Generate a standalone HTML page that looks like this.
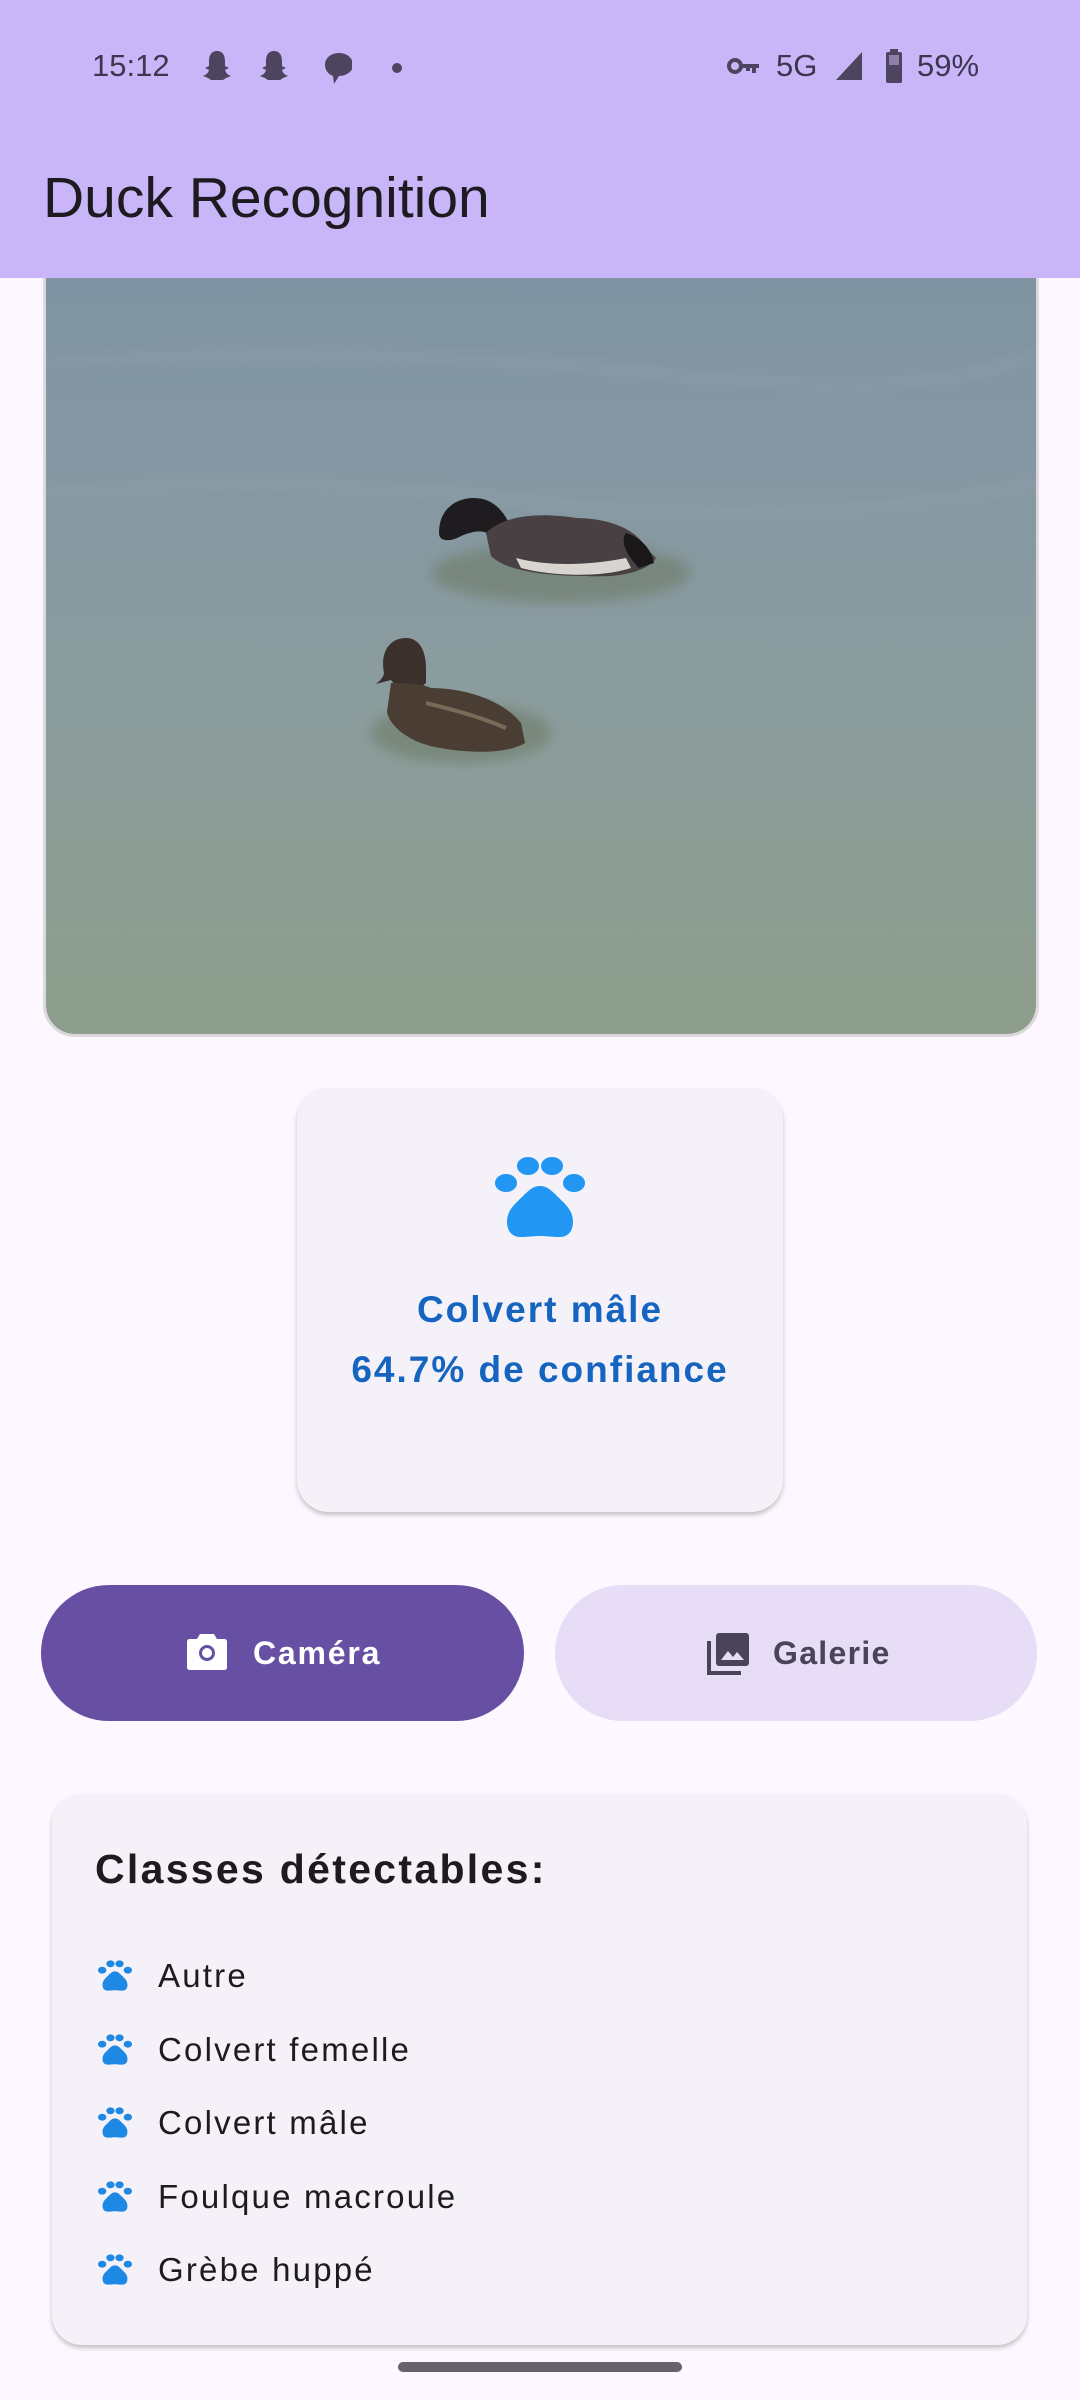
<!DOCTYPE html>
<html><head><meta charset="utf-8"><style>
*{margin:0;padding:0;box-sizing:border-box}
body{width:1080px;height:2400px;background:#fdf7ff;font-family:"Liberation Sans",sans-serif;position:relative;overflow:hidden}
.abs{position:absolute}
#bar{left:0;top:0;width:1080px;height:278px;background:#c8b6f8;z-index:2}
</style></head><body>
<svg width="0" height="0" style="position:absolute"><defs>
<symbol id="paw" viewBox="0 0 90 82"><ellipse cx="11" cy="27" rx="11" ry="9"/><ellipse cx="33" cy="10" rx="11" ry="9"/><ellipse cx="57" cy="10" rx="11" ry="9"/><ellipse cx="79" cy="27" rx="11" ry="9"/><path d="M45 30c-7 0-11 4-18 11-7 7-15 13-15 25 0 9 5 15 13 15 8 0 14-1 20-1s12 1 20 1c8 0 13-6 13-15 0-12-8-18-15-25-7-7-11-11-18-11z"/></symbol>
</defs></svg>

<div id="bar" class="abs">
 <div class="abs" style="left:92px;top:48px;font-size:31px;color:#3d3650">15:12</div>
 <svg class="abs" style="left:202px;top:48px" width="150" height="40" viewBox="0 0 150 40" fill="#4d4560">
  <path d="M15 3c-6 0-8 5-8 10v5l-4 2 4 2c-1 4-4 5-6 6l5 2 3 2h12l3-2 5-2c-2-1-5-2-6-6l4-2-4-2v-5c0-5-2-10-8-10z"/>
  <path d="M72 3c-6 0-8 5-8 10v5l-4 2 4 2c-1 4-4 5-6 6l5 2 3 2h12l3-2 5-2c-2-1-5-2-6-6l4-2-4-2v-5c0-5-2-10-8-10z"/>
  <path d="M137 5c-8 0-14 5-14 12 0 5 3 9 8 11l1 8 5-8c8 0 14-5 14-11 0-7-6-12-14-12z"/>
 </svg>
 <div class="abs" style="left:392px;top:63px;width:10px;height:10px;border-radius:50%;background:#4d4560"></div>
 <svg class="abs" style="left:726px;top:54px" width="36" height="24" viewBox="0 0 36 24" fill="none" stroke="#4d4560" stroke-width="4"><circle cx="9" cy="12" r="6"/><path d="M15 12h18M28 12v7M22 12v5"/></svg>
 <div class="abs" style="left:776px;top:48px;font-size:31px;color:#3d3650">5G</div>
 <svg class="abs" style="left:834px;top:50px" width="30" height="32" viewBox="0 0 30 32"><path d="M28 2v28H2z" fill="#4d4560"/></svg>
 <svg class="abs" style="left:884px;top:48px" width="20" height="36" viewBox="0 0 20 36"><rect x="6" y="1" width="8" height="4" fill="#4d4560"/><rect x="2" y="4" width="16" height="31" rx="2" fill="#4d4560"/><rect x="5" y="7" width="10" height="10" fill="#8c80a8"/></svg>
 <div class="abs" style="left:917px;top:48px;font-size:31px;color:#3d3650">59%</div>
 <div class="abs" style="left:43px;top:170px;font-size:57px;color:#1d1b20;line-height:1">Duck Recognition</div>
</div>

<div class="abs" style="left:43px;top:230px;width:996px;height:807px;border-radius:32px;border:3px solid #dcd8de;overflow:hidden">
<svg width="990" height="801" viewBox="0 0 990 801">
 <defs><linearGradient id="w" x1="0" y1="0" x2="0" y2="1">
  <stop offset="0" stop-color="#7e92a2"/><stop offset="0.3" stop-color="#8597a2"/><stop offset="0.55" stop-color="#8a9c9e"/><stop offset="0.8" stop-color="#8c9d95"/><stop offset="1" stop-color="#8e9e8c"/></linearGradient>
  <filter id="bl"><feGaussianBlur stdDeviation="6"/></filter></defs>
 <rect width="990" height="801" fill="url(#w)"/>
 <g filter="url(#bl)" opacity="0.2" fill="none" stroke="#a9b8c2" stroke-width="8">
  <path d="M0 130 Q300 110 600 140 T990 120"/><path d="M0 260 Q250 240 500 270 T990 250"/></g>
 <ellipse cx="515" cy="340" rx="130" ry="30" fill="#6e7c68" opacity="0.6" filter="url(#bl)"/>
 <path d="M393 300c0-25 18-35 35-35 18 0 30 12 37 30l-20 8c-8-8-20-4-30 0-10 6-22 6-22-3z" fill="#1f1c1f"/>
 <path d="M440 300c20-20 60-20 90-15 30 0 60 10 70 30l10 10c-10 15-40 20-70 18-40 0-80-5-95-20z" fill="#494043"/>
 <path d="M470 325c30 8 70 8 110 0l5 10c-30 10-80 8-110 0z" fill="#d8d5d0"/>
 <path d="M580 300c15 5 25 15 28 30l-15 5c-10-10-20-25-13-35z" fill="#1a1718"/>
 <ellipse cx="415" cy="500" rx="90" ry="30" fill="#6e7c68" opacity="0.6" filter="url(#bl)"/>
 <path d="M338 440c-4-20 5-35 22-35 14 0 20 14 20 30l0 15c-10 10-28 8-35-3l-15 4c5-4 8-8 8-11z" fill="#3b302b"/>
 <path d="M345 450c10 0 30 0 40 5 30 0 70 10 90 35l4 20c-20 12-60 10-90 4-25-5-45-20-48-35z" fill="#4a3d33"/>
 <path d="M380 470c20 5 50 12 80 25" stroke="#7a6a58" stroke-width="4" fill="none"/>
</svg>
</div>

<div class="abs" style="left:297px;top:1088px;width:486px;height:424px;border-radius:32px;background:#f5f1f8;box-shadow:0 3px 5px rgba(0,0,0,0.22)">
 <svg class="abs" style="left:198px;top:68px" width="90" height="82" fill="#2196f3"><use href="#paw"/></svg>
 <div class="abs" style="left:0;top:192px;width:486px;text-align:center;color:#1565c0;font-weight:bold;font-size:37px;letter-spacing:2px;line-height:60px">Colvert mâle<br>64.7% de confiance</div>
</div>

<div class="abs" style="left:41px;top:1585px;width:483px;height:136px;border-radius:68px;background:#6750a4;color:#fff;font-size:32px;font-weight:bold;letter-spacing:1.8px">
 <svg class="abs" style="left:146px;top:49px" width="40" height="36" viewBox="0 0 40 36" fill="#fff"><path d="M13 0h14l3 5h7c2 0 3 1 3 3v25c0 2-1 3-3 3H3c-2 0-3-1-3-3V8c0-2 1-3 3-3h7z"/><circle cx="20" cy="19" r="8" fill="#6750a4"/><circle cx="20" cy="19" r="5" fill="#fff"/></svg>
 <div class="abs" style="left:212px;top:50px">Caméra</div>
</div>
<div class="abs" style="left:555px;top:1585px;width:482px;height:136px;border-radius:68px;background:#e8ddf7;color:#4a4458;font-size:32px;font-weight:bold;letter-spacing:1.3px">
 <svg class="abs" style="left:152px;top:48px" width="42" height="42" viewBox="0 0 42 42" fill="#4a4458"><path d="M0 8h4v30h30v4H0z"/><rect x="9" y="0" width="33" height="33" rx="3"/><path d="M14 27l7-9 5 6 4-5 7 8z" fill="#e8ddf7"/></svg>
 <div class="abs" style="left:218px;top:50px">Galerie</div>
</div>

<div class="abs" style="left:52px;top:1794px;width:975px;height:551px;border-radius:30px;background:#f5f1f8;box-shadow:0 3px 5px rgba(0,0,0,0.22)">
 <div class="abs" style="left:43px;top:52px;font-size:41px;font-weight:bold;color:#1d1b20;letter-spacing:2.3px">Classes détectables:</div>
 <div class="abs" style="left:46px;top:145px;font-size:33px;color:#1d1b20;line-height:73.5px;letter-spacing:2.2px">
  <div><svg width="34" height="31" style="vertical-align:-4px;margin-right:26px" fill="#1e88e5"><use href="#paw"/></svg>Autre</div>
  <div><svg width="34" height="31" style="vertical-align:-4px;margin-right:26px" fill="#1e88e5"><use href="#paw"/></svg>Colvert femelle</div>
  <div><svg width="34" height="31" style="vertical-align:-4px;margin-right:26px" fill="#1e88e5"><use href="#paw"/></svg>Colvert mâle</div>
  <div><svg width="34" height="31" style="vertical-align:-4px;margin-right:26px" fill="#1e88e5"><use href="#paw"/></svg>Foulque macroule</div>
  <div><svg width="34" height="31" style="vertical-align:-4px;margin-right:26px" fill="#1e88e5"><use href="#paw"/></svg>Grèbe huppé</div>
 </div>
</div>

<div class="abs" style="left:398px;top:2362px;width:284px;height:10px;border-radius:5px;background:#66626a"></div>
</body></html>
